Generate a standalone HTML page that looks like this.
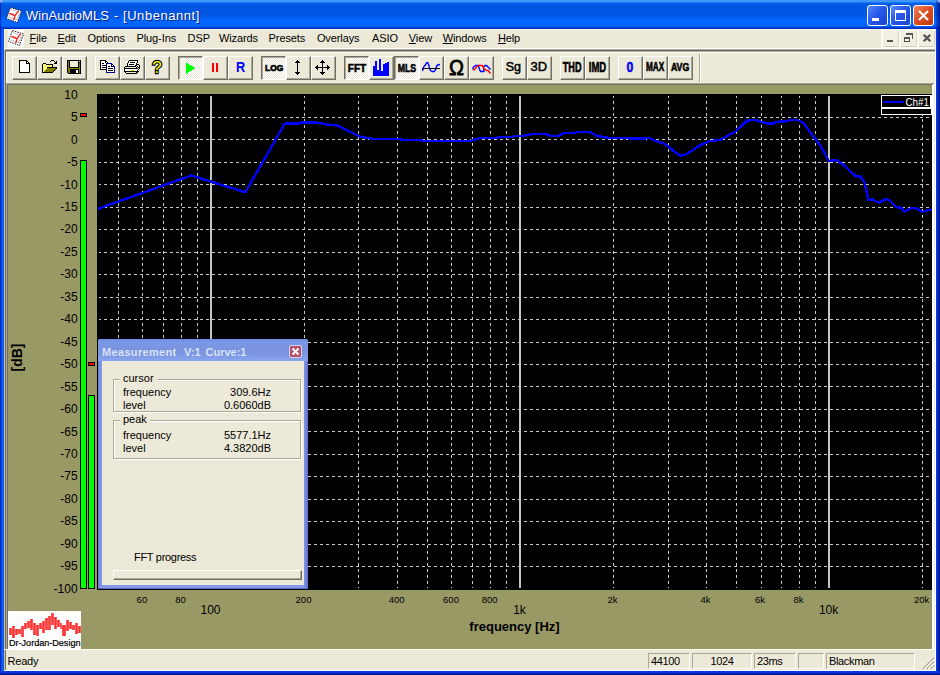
<!DOCTYPE html>
<html><head><meta charset="utf-8"><title>WinAudioMLS - [Unbenannt]</title>
<style>
html,body{margin:0;padding:0}
body{width:940px;height:675px;overflow:hidden;position:relative;background:#ece9d8;font-family:"Liberation Sans",sans-serif;font-size:11px;color:#000}
div,span{box-sizing:border-box}
.abs{position:absolute}
#title{position:absolute;left:0;top:0;width:940px;height:29px;background:linear-gradient(to bottom,#3f96fc 0,#3f96fc 1.600px,#0a6af4 2.800px,#0058e0 4.500px,#0055e0 12px,#005ae8 16px,#0066ff 20px,#0066ff 26px,#0050e0 27px,#0030c8 28px,#0030c8 29px)}
#title .cap{position:absolute;left:26px;top:8px;font-size:13px;color:#fff;white-space:pre;text-shadow:1px 1px 0 #0a1883;letter-spacing:0.05px}
.wb{position:absolute;top:5px;width:21px;height:21px;border:1px solid #fff;border-radius:3px;background:linear-gradient(135deg,#5a8af8 0,#2858ea 45%,#1a42cc 100%)}
.wb.close{background:linear-gradient(135deg,#ee8560 0,#dc4c20 50%,#c23a12 100%)}
#lb{position:absolute;left:0;top:29px;width:4px;height:646px;background:linear-gradient(to right,#0019cf 0,#0831d9 1px,#166aee 2px,#0855dd 4px)}
#rb{position:absolute;left:936px;top:29px;width:4px;height:646px;background:linear-gradient(to right,#0a3ce0 0,#0831d9 2px,#001590 3px,#001590 4px)}
#bb{position:absolute;left:0;top:671px;width:940px;height:4px;background:linear-gradient(to bottom,#0a3ce0 0,#0831d9 2px,#001590 3px,#001590 4px)}
#menu{position:absolute;left:4px;top:29px;width:932px;height:21px;background:#ece9d8;border-top:1px solid #fbf8e8}
.mi{position:absolute;top:31px;height:14px;line-height:14px;font-size:11px;white-space:nowrap;text-align:center;letter-spacing:-0.100px}
.mi u{text-decoration:underline;text-underline-offset:1px}
.mdib{position:absolute;top:31px;width:16px;height:16px;background:#f1efe2;border-right:1px solid #d8d4c2;border-bottom:1px solid #d0ccb8;border-radius:1px}
.tb{position:absolute;top:56px;width:25px;height:24px;background:#ece9d8;border-left:1px solid #fff;border-top:1px solid #fff;border-right:1px solid #716f64;border-bottom:1px solid #716f64;box-shadow:inset -1px -1px 0 #aca899}
.tb>*{position:absolute;left:-1px;top:-1px}
.tb.pressed{border-left:1px solid #716f64;border-top:1px solid #716f64;border-right:1px solid #fff;border-bottom:1px solid #fff;box-shadow:inset 1px 1px 0 #aca899;background:#f6f4ea conic-gradient(#fff 25%,#ece9d8 0 50%,#fff 0 75%,#ece9d8 0) 0 0/2px 2px}
.tb.pressed>*{left:0;top:0}
.tb .t{width:24px;text-align:center;font-weight:bold;line-height:16px;left:-1px;white-space:nowrap}
.tb.pressed .t{left:0;margin-top:1px}
.tb .heavy{-webkit-text-stroke:0.500px #000}
.tb .q{width:24px;text-align:center;font-weight:bold;font-size:17px;line-height:16px;top:3px;color:#ffff00;-webkit-text-stroke:1px #000;paint-order:stroke fill}
#client{position:absolute;left:6px;top:83px;width:928px;height:567px;background:#999966;border-left:2px solid #716f64;border-top:2px solid #716f64;border-right:2px solid #fff;border-bottom:1px solid #fff}
.sp{position:absolute;top:653px;height:16px;border-left:1px solid #aca899;border-top:1px solid #aca899;border-right:1px solid #fff;border-bottom:1px solid #fff;font-size:11px;line-height:15px;padding-left:2px;white-space:nowrap;letter-spacing:-0.350px}
#dlg{position:absolute;left:98px;top:339px;width:210px;height:250px;background:linear-gradient(to right,#6b80d8 0,#8397e6 3px,#8397e6 206px,#7185dc 208px,#5e70cc 210px);border-radius:2px 2px 0 0;box-shadow:inset 0 -1px 0 #5a6cc8}
#dlg .tt{position:absolute;left:0;top:0;width:210px;height:22px;border-radius:2px 2px 0 0;background:linear-gradient(to bottom,#6f8be4 0,#7b98e6 3px,#7a93df 10px,#7d97e2 16px,#88a4ee 21px,#88a4ee 22px)}
#dlg .cap{position:absolute;left:4px;top:7px;font-weight:bold;font-size:11px;line-height:13px;color:#d9e2f7;white-space:pre}
#dlg .body{position:absolute;left:4px;top:22px;width:202px;height:224px;background:#ece9d8}
.gb{position:absolute;border:1px solid #aca899;box-shadow:inset 1px 1px 0 #fff,1px 1px 0 #fff}
.gb .lg{position:absolute;left:6px;top:-8px;background:#ece9d8;padding:0 3px;line-height:13px}
.dl{position:absolute;line-height:13px;white-space:nowrap}
</style></head><body>
<div id="title">
<svg class="abs" style="left:6px;top:7px" width="16" height="16" viewBox="0 0 16 16"><path d="M4.500 0.500L15.500 4L11.500 15.500L0.500 11.500Z" fill="#fff" stroke="#222" stroke-width="1" stroke-dasharray="1.500 1"/><path d="M1.500 9.500L12 13M2.500 6.500L7 8M5 2.500L10.500 4.500M13.500 6L10.500 13" fill="none" stroke="#999" stroke-width="0.600"/><path d="M3.500 6.500C6 7 7.500 7.500 9 9M12.500 4C11 6 9.500 7.500 9 9C8.500 10.500 8.500 11.500 7.500 13" fill="none" stroke="#ff2020" stroke-width="1.300"/></svg>
<span class="cap">WinAudioMLS <span style="position:absolute;left:88px;top:0">-</span> <span style="position:absolute;left:97px;top:0;letter-spacing:0.55px">[Unbenannt]</span></span>
<div class="wb" style="left:867px"><div class="abs" style="left:4px;top:12px;width:7px;height:3px;background:#fff"></div></div>
<div class="wb" style="left:890px"><div class="abs" style="left:4px;top:4px;width:11px;height:11px;border:1px solid #fff;border-top:3px solid #fff"></div></div>
<div class="wb close" style="left:913px"><svg class="abs" style="left:0;top:0" width="19" height="19"><path d="M5 5L14 14M14 5L5 14" stroke="#fff" stroke-width="2.200"/></svg></div>
</div>
<div class="abs" style="left:936px;top:0;width:4px;height:29px;background:linear-gradient(to right,rgba(0,20,150,0.25),rgba(0,10,120,0.75))"></div><div class="abs" style="left:0;top:0;width:1px;height:29px;background:rgba(0,10,150,0.6)"></div><div class="abs" style="left:0;top:0;width:3px;height:3px;background:linear-gradient(135deg,#8ea6ee 0,#8ea6ee 45%,rgba(120,150,240,0) 75%)"></div><div class="abs" style="left:937px;top:0;width:3px;height:3px;background:linear-gradient(225deg,#8ea6ee 0,#8ea6ee 45%,rgba(120,150,240,0) 75%)"></div>
<div id="lb"></div><div id="rb"></div><div id="bb"></div>
<div class="abs" style="left:4px;top:29px;width:1px;height:642px;background:#c8c2a8"></div>
<div class="abs" style="left:935px;top:29px;width:1px;height:642px;background:#fff"></div>
<div id="menu"></div>
<div class="abs" style="left:8px;top:30px;width:16px;height:17px;background:#fff"></div>
<svg class="abs" style="left:8px;top:30px" width="16" height="16" viewBox="0 0 16 16"><path d="M4.500 0.500L15.500 4L11.500 15.500L0.500 11.500Z" fill="#fff" stroke="#222" stroke-width="1" stroke-dasharray="1.500 1"/><path d="M1.500 9.500L12 13M2.500 6.500L7 8M5 2.500L10.500 4.500M13.500 6L10.500 13" fill="none" stroke="#999" stroke-width="0.600"/><path d="M3.500 6.500C6 7 7.500 7.500 9 9M12.500 4C11 6 9.500 7.500 9 9C8.500 10.500 8.500 11.500 7.500 13" fill="none" stroke="#ff2020" stroke-width="1.300"/></svg>
<span class="mi" style="left:29.6px;width:15.5px"><u>F</u>ile</span>
<span class="mi" style="left:57.5px;width:17.8px"><u>E</u>dit</span>
<span class="mi" style="left:87.6px;width:36.5px">Options</span>
<span class="mi" style="left:136.5px;width:38.7px">Plug-Ins</span>
<span class="mi" style="left:187.6px;width:18.7px">DSP</span>
<span class="mi" style="left:218.9px;width:37.3px">Wizards</span>
<span class="mi" style="left:268.6px;width:35.4px">Presets</span>
<span class="mi" style="left:316.9px;width:42.2px">Overlays</span>
<span class="mi" style="left:372.0px;width:23.6px">ASIO</span>
<span class="mi" style="left:408.8px;width:21.2px"><u>V</u>iew</span>
<span class="mi" style="left:442.7px;width:42.3px"><u>W</u>indows</span>
<span class="mi" style="left:497.9px;width:20.6px"><u>H</u>elp</span>
<div class="abs" style="left:881px;top:30px;width:54px;height:18px;background:#fbfaf4"></div>
<div class="mdib" style="left:883px"><div class="abs" style="left:4px;top:9px;width:6px;height:2px;background:#555"></div></div>
<div class="mdib" style="left:901px"><svg class="abs" style="left:0;top:0" width="16" height="16" shape-rendering="crispEdges"><rect x="5" y="2" width="7" height="2" fill="#555"/><rect x="11" y="2" width="1" height="6" fill="#555"/><rect x="3" y="6" width="6" height="5" fill="#f1efe2"/><rect x="3" y="6" width="6" height="2" fill="#555"/><rect x="3" y="6" width="1" height="5" fill="#555"/><rect x="8" y="6" width="1" height="5" fill="#555"/><rect x="3" y="10" width="6" height="1" fill="#555"/></svg></div>
<div class="mdib" style="left:919px"><svg class="abs" style="left:0;top:0" width="16" height="16"><path d="M4.700 3.700L11.300 10.300M11.300 3.700L4.700 10.300" stroke="#555" stroke-width="2.300"/></svg></div>
<div class="abs" style="left:5px;top:48px;width:930px;height:1px;background:#fff"></div>
<div class="abs" style="left:5px;top:49px;width:930px;height:3px;background:linear-gradient(#aca899 0,#aca899 1px,#716f64 1px,#716f64 2px,#aca899 2px,#aca899 3px)"></div>
<div class="abs" style="left:5px;top:52px;width:930px;height:1px;background:#fff"></div>
<div class="abs" style="left:5px;top:50px;width:1px;height:620px;background:#716f64"></div>
<div class="abs" style="left:6px;top:52px;width:1px;height:31px;background:#fff"></div>
<div class="tb" style="left:12px"><svg width="24" height="23" viewBox="0 0 24 23" ><g shape-rendering="crispEdges"><path d="M7.5 4.5H14.5L17.5 7.5V16.5H7.5Z" fill="#fff" stroke="#000"/><path d="M14.5 4.5V7.5H17.5" fill="none" stroke="#000"/></g></svg></div>
<div class="tb" style="left:37px"><svg width="24" height="23" viewBox="0 0 24 23" ><g shape-rendering="crispEdges"><rect x="6" y="8" width="3" height="1" fill="#ffff70"/><rect x="6" y="9" width="9" height="2" fill="#ffff70"/><rect x="6" y="11" width="4" height="1" fill="#ffff70"/><rect x="6" y="12" width="3" height="1" fill="#ffff70"/><rect x="6" y="13" width="2" height="1" fill="#ffff70"/><rect x="6" y="14" width="1" height="1" fill="#ffff70"/><rect x="10" y="12" width="9" height="1" fill="#808000"/><rect x="9" y="13" width="9" height="1" fill="#808000"/><rect x="8" y="14" width="9" height="1" fill="#808000"/><rect x="7" y="15" width="9" height="1" fill="#808000"/><rect x="6" y="7" width="3" height="1" fill="#000"/><rect x="5" y="8" width="1" height="9" fill="#000"/><rect x="9" y="8" width="7" height="1" fill="#000"/><rect x="15" y="9" width="1" height="2" fill="#000"/><rect x="10" y="11" width="10" height="1" fill="#000"/><rect x="9" y="12" width="1" height="1" fill="#ffff70"/><rect x="8" y="13" width="1" height="1" fill="#ffff70"/><rect x="7" y="14" width="1" height="1" fill="#ffff70"/><rect x="6" y="15" width="1" height="1" fill="#ffff70"/><rect x="19" y="12" width="1" height="1" fill="#000"/><rect x="18" y="13" width="1" height="1" fill="#000"/><rect x="17" y="14" width="1" height="1" fill="#000"/><rect x="16" y="15" width="1" height="1" fill="#000"/><rect x="5" y="16" width="11" height="1" fill="#000"/><rect x="13" y="5" width="1" height="1" fill="#000"/><rect x="14" y="4" width="3" height="1" fill="#000"/><rect x="17" y="5" width="1" height="1" fill="#000"/><rect x="18" y="6" width="1" height="1" fill="#000"/><rect x="19" y="5" width="1" height="3" fill="#000"/><rect x="17" y="7" width="2" height="1" fill="#000"/></g></svg></div>
<div class="tb" style="left:62px"><svg width="24" height="23" viewBox="0 0 24 23" ><g shape-rendering="crispEdges"><rect x="5" y="4" width="14" height="14" fill="#000"/><rect x="6" y="5" width="1" height="12" fill="#808000"/><rect x="17" y="7" width="1" height="10" fill="#808000"/><rect x="7" y="12" width="10" height="1" fill="#808000"/><rect x="7" y="13" width="1" height="4" fill="#808000"/><rect x="8" y="5" width="8" height="6" fill="#ece9d8"/><rect x="14" y="14" width="2" height="3" fill="#fff"/><rect x="17" y="5" width="1" height="1" fill="#fff"/><rect x="5" y="17" width="1" height="1" fill="#ece9d8"/></g></svg></div>
<div class="tb" style="left:95px"><svg width="24" height="23" viewBox="0 0 24 23" ><g shape-rendering="crispEdges"><rect x="6" y="5" width="5" height="8" fill="#fff"/><rect x="11" y="6" width="1" height="7" fill="#fff"/><rect x="5" y="4" width="6" height="1" fill="#000"/><rect x="5" y="4" width="1" height="10" fill="#000"/><rect x="5" y="13" width="7" height="1" fill="#000"/><rect x="11" y="5" width="1" height="1" fill="#000"/><rect x="12" y="6" width="1" height="2" fill="#000"/><rect x="10" y="5" width="1" height="2" fill="#000"/><rect x="7" y="7" width="2" height="1" fill="#000"/><rect x="7" y="9" width="4" height="1" fill="#000"/><rect x="7" y="11" width="4" height="1" fill="#000"/><rect x="12" y="8" width="5" height="8" fill="#fff"/><rect x="17" y="9" width="1" height="7" fill="#fff"/><rect x="18" y="10" width="1" height="6" fill="#fff"/><rect x="11" y="7" width="6" height="1" fill="#000080"/><rect x="11" y="7" width="1" height="10" fill="#000080"/><rect x="11" y="16" width="9" height="1" fill="#000080"/><rect x="19" y="10" width="1" height="7" fill="#000080"/><rect x="17" y="8" width="1" height="1" fill="#000080"/><rect x="18" y="9" width="1" height="1" fill="#000080"/><rect x="16" y="8" width="1" height="3" fill="#000080"/><rect x="17" y="10" width="2" height="1" fill="#000080"/><rect x="13" y="10" width="2" height="1" fill="#000"/><rect x="13" y="12" width="5" height="1" fill="#000"/><rect x="13" y="14" width="5" height="1" fill="#000"/></g></svg></div>
<div class="tb" style="left:120px"><svg width="24" height="23" viewBox="0 0 24 23" ><g shape-rendering="crispEdges"><rect x="9" y="5" width="8" height="1" fill="#fff"/><rect x="8" y="6" width="9" height="1" fill="#fff"/><rect x="8" y="7" width="8" height="1" fill="#fff"/><rect x="8" y="8" width="8" height="1" fill="#fff"/><rect x="8" y="9" width="7" height="1" fill="#fff"/><rect x="9" y="4" width="9" height="1" fill="#000"/><rect x="8" y="5" width="1" height="2" fill="#000"/><rect x="7" y="7" width="1" height="3" fill="#000"/><rect x="17" y="5" width="1" height="2" fill="#000"/><rect x="16" y="7" width="1" height="2" fill="#000"/><rect x="15" y="9" width="1" height="1" fill="#000"/><rect x="10" y="6" width="5" height="1" fill="#000"/><rect x="9" y="8" width="5" height="1" fill="#000"/><rect x="5" y="10" width="3" height="1" fill="#000"/><rect x="8" y="10" width="8" height="1" fill="#000"/><rect x="4" y="11" width="1" height="5" fill="#000"/><rect x="5" y="11" width="11" height="1" fill="#ece9d8"/><rect x="4" y="12" width="13" height="1" fill="#000"/><rect x="5" y="13" width="12" height="2" fill="#fff"/><rect x="11" y="14" width="3" height="1" fill="#e8e800"/><rect x="4" y="15" width="14" height="1" fill="#000"/><rect x="5" y="16" width="1" height="1" fill="#000"/><rect x="6" y="16" width="10" height="1" fill="#ece9d8"/><rect x="16" y="16" width="1" height="1" fill="#000"/><rect x="6" y="17" width="11" height="1" fill="#000"/><rect x="16" y="9" width="1" height="1" fill="#000"/><rect x="17" y="8" width="1" height="1" fill="#000"/><rect x="18" y="8" width="1" height="1" fill="#000"/><rect x="19" y="9" width="1" height="4" fill="#000"/><rect x="18" y="13" width="1" height="1" fill="#000"/><rect x="17" y="14" width="1" height="1" fill="#000"/><rect x="18" y="15" width="1" height="1" fill="#000"/><rect x="17" y="16" width="1" height="1" fill="#000"/><rect x="17" y="10" width="1" height="1" fill="#000"/><rect x="18" y="11" width="1" height="1" fill="#000"/><rect x="17" y="12" width="1" height="1" fill="#000"/><rect x="16" y="11" width="1" height="1" fill="#000"/><rect x="18" y="9" width="1" height="1" fill="#ece9d8"/></g></svg></div>
<div class="tb" style="left:145px"></div>
<div class="tb pressed" style="left:178px"><svg width="24" height="23" viewBox="0 0 24 23" ><path d="M7 5.5V17L16.3 11.2Z" fill="#00ff00" shape-rendering="crispEdges"/></svg></div>
<div class="tb" style="left:203px"><svg width="24" height="23" viewBox="0 0 24 23" ><g fill="#ff0000" shape-rendering="crispEdges"><rect x="9" y="7" width="2" height="9"/><rect x="13" y="7" width="2" height="9"/></g></svg></div>
<div class="tb" style="left:228px"></div>
<div class="tb pressed" style="left:261px"></div>
<div class="tb" style="left:286px"><svg width="24" height="23" viewBox="0 0 24 23" ><g shape-rendering="crispEdges"><rect x="11" y="4" width="1" height="15" fill="#000"/><rect x="10" y="5" width="3" height="1" fill="#000"/><rect x="9" y="6" width="5" height="1" fill="#000"/><rect x="9" y="16" width="5" height="1" fill="#000"/><rect x="10" y="17" width="3" height="1" fill="#000"/></g></svg></div>
<div class="tb" style="left:311px"><svg width="24" height="23" viewBox="0 0 24 23" ><g shape-rendering="crispEdges"><rect x="11" y="4" width="1" height="15" fill="#000"/><rect x="10" y="5" width="3" height="1" fill="#000"/><rect x="9" y="6" width="5" height="1" fill="#000"/><rect x="9" y="16" width="5" height="1" fill="#000"/><rect x="10" y="17" width="3" height="1" fill="#000"/><rect x="4" y="11" width="15" height="1" fill="#000"/><rect x="5" y="10" width="1" height="3" fill="#000"/><rect x="6" y="9" width="1" height="5" fill="#000"/><rect x="16" y="9" width="1" height="5" fill="#000"/><rect x="17" y="10" width="1" height="3" fill="#000"/></g></svg></div>
<div class="tb pressed" style="left:344px"></div>
<div class="tb" style="left:369px"><svg width="24" height="23" viewBox="0 0 24 23" ><g shape-rendering="crispEdges" fill="#0000ff"><rect x="4" y="10" width="2" height="10"/><rect x="6" y="5" width="2" height="15"/><rect x="8" y="14" width="2" height="6"/><rect x="10" y="3" width="2" height="17"/><rect x="12" y="15" width="2" height="5"/><rect x="14" y="8" width="2" height="12"/><rect x="16" y="6.500" width="2" height="13.500"/><rect x="18" y="6" width="2" height="14"/></g></svg></div>
<div class="tb pressed" style="left:394px"></div>
<div class="tb" style="left:419px"><svg width="24" height="23" viewBox="0 0 24 23" ><path d="M3.5 15L4.5 11.5L5.5 9.5L6.5 9.3L7 7.5L8 6.5L9 7L9.8 9L10.5 12L11.5 14.5L13 15.5L15 15.5L16.5 14L17.5 10.5L18.5 9L21 8.5" fill="none" stroke="#0000ff" stroke-width="1.4" stroke-linejoin="round"/><rect x="3" y="12" width="18" height="1" fill="#000" shape-rendering="crispEdges"/></svg></div>
<div class="tb" style="left:444px"></div>
<div class="tb" style="left:469px"><svg width="24" height="23" viewBox="0 0 24 23" ><path d="M4 13.5L4 11.5L6.5 9.5L9.5 9.5L10 12L11.5 15.5L15 15.5L14.5 11L16 9.5L17.5 9.5L21.5 13.5" fill="none" stroke="#0000ff" stroke-width="1.4" stroke-linejoin="round"/><path d="M4.500 14.500L8 10.500L9.500 9.500L13.500 9.500L14.500 12L17.500 14.500L19 14.500L21.500 17.500" fill="none" stroke="#ff0000" stroke-width="1.4" stroke-linejoin="round"/></svg></div>
<div class="tb" style="left:502px"></div>
<div class="tb" style="left:527px"></div>
<div class="tb" style="left:560px"></div>
<div class="tb" style="left:585px"></div>
<div class="tb" style="left:618px"></div>
<div class="tb" style="left:643px"></div>
<div class="tb" style="left:668px"></div>
<svg width="940" height="90" viewBox="0 0 940 90" style="position:absolute;left:0;top:0;font-family:Liberation Sans,sans-serif"><text x="156.9" y="72.8" font-size="17" font-weight="normal" fill="#ffff00" stroke="#000" stroke-width="2.3" paint-order="stroke" text-anchor="middle" stroke-linejoin="miter">?</text><text x="236" y="72" font-size="14" font-weight="bold" fill="#0000ff" textLength="9.2" lengthAdjust="spacingAndGlyphs">R</text><text x="265" y="70.8" font-size="9.5" font-weight="bold" fill="#000" stroke="#000" stroke-width="0.7" textLength="18.3" lengthAdjust="spacingAndGlyphs">LOG</text><text x="347.8" y="72" font-size="11" font-weight="bold" fill="#000" stroke="#000" stroke-width="0.6" textLength="18.5" lengthAdjust="spacingAndGlyphs">FFT</text><text x="397.7" y="72.2" font-size="11" font-weight="bold" fill="#000" stroke="#000" stroke-width="0.6" textLength="18.3" lengthAdjust="spacingAndGlyphs">MLS</text><text x="449" y="74.7" font-size="22" font-weight="normal" fill="#000" stroke="#000" stroke-width="0.8" textLength="15.0" lengthAdjust="spacingAndGlyphs">Ω</text><text x="505.7" y="71.3" font-size="12.5" font-weight="normal" fill="#000" stroke="#000" stroke-width="0.5" textLength="15.3" lengthAdjust="spacingAndGlyphs">Sg</text><text x="530.6" y="71.3" font-size="12.5" font-weight="normal" fill="#000" stroke="#000" stroke-width="0.5" textLength="16.6" lengthAdjust="spacingAndGlyphs">3D</text><text x="562.8" y="72" font-size="14" font-weight="bold" fill="#000" stroke="#000" stroke-width="0.6" textLength="18.7" lengthAdjust="spacingAndGlyphs">THD</text><text x="588.8" y="72" font-size="14" font-weight="bold" fill="#000" stroke="#000" stroke-width="0.6" textLength="17.4" lengthAdjust="spacingAndGlyphs">IMD</text><text x="626.6" y="72" font-size="14" font-weight="bold" fill="#0000ff" stroke="#0000ff" stroke-width="0.5" textLength="6.8" lengthAdjust="spacingAndGlyphs">0</text><text x="646" y="70.7" font-size="12" font-weight="bold" fill="#000" stroke="#000" stroke-width="0.6" textLength="18.3" lengthAdjust="spacingAndGlyphs">MAX</text><text x="670.9" y="70.7" font-size="11" font-weight="bold" fill="#000" stroke="#000" stroke-width="0.6" textLength="18.3" lengthAdjust="spacingAndGlyphs">AVG</text></svg>
<div class="abs" style="left:699px;top:54px;width:1px;height:28px;background:#aca899"></div>
<div class="abs" style="left:700px;top:54px;width:1px;height:28px;background:#fff"></div>
<div id="client"></div>
<div class="abs" style="left:6px;top:83px;width:1px;height:566px;background:#aca899"></div>
<div class="abs" style="left:6px;top:83px;width:926px;height:1px;background:#aca899"></div>
<svg class="plot" width="940" height="675" viewBox="0 0 940 675" style="position:absolute;left:0;top:0">
<rect x="97" y="94" width="835" height="496" fill="#000" shape-rendering="crispEdges"/>
<g stroke="#c8c8c8" stroke-width="1" stroke-dasharray="3 3" stroke-dashoffset="1" shape-rendering="crispEdges" fill="none">
<path d="M99 117.5H931"/>
<path d="M99 139.5H931"/>
<path d="M99 162.5H931"/>
<path d="M99 184.5H931"/>
<path d="M99 207.5H931"/>
<path d="M99 229.5H931"/>
<path d="M99 252.5H931"/>
<path d="M99 274.5H931"/>
<path d="M99 297.5H931"/>
<path d="M99 319.5H931"/>
<path d="M99 342.5H931"/>
<path d="M99 364.5H931"/>
<path d="M99 386.5H931"/>
<path d="M99 409.5H931"/>
<path d="M99 431.5H931"/>
<path d="M99 454.5H931"/>
<path d="M99 476.5H931"/>
<path d="M99 499.5H931"/>
<path d="M99 521.5H931"/>
<path d="M99 544.5H931"/>
<path d="M99 566.5H931"/>
<path d="M118.5 96V588"/>
<path d="M142.5 96V588"/>
<path d="M163.5 96V588"/>
<path d="M181.5 96V588"/>
<path d="M197.5 96V588"/>
<path d="M304.5 96V588"/>
<path d="M358.5 96V588"/>
<path d="M397.5 96V588"/>
<path d="M427.5 96V588"/>
<path d="M451.5 96V588"/>
<path d="M472.5 96V588"/>
<path d="M490.5 96V588"/>
<path d="M506.5 96V588"/>
<path d="M613.5 96V588"/>
<path d="M668.5 96V588"/>
<path d="M706.5 96V588"/>
<path d="M736.5 96V588"/>
<path d="M761.5 96V588"/>
<path d="M781.5 96V588"/>
<path d="M799.5 96V588"/>
<path d="M815.5 96V588"/>
<path d="M922.5 96V588"/>
</g>
<g fill="#c4c4c4" shape-rendering="crispEdges">
<rect x="210" y="96" width="2" height="492"/>
<rect x="519" y="96" width="2" height="492"/>
<rect x="828" y="96" width="2" height="492"/>
</g>
<polyline points="98.0,208.8 191.2,175.5 245.4,192.2 284.7,123.7 299.4,123.5 300.6,122.7 315.4,122.4 319.8,123.0 326.7,124.5 337.7,125.6 359.0,136.4 372.1,138.8 399.0,138.8 401.5,139.8 420.6,140.1 423.0,140.8 470.4,140.8 479.3,138.3 496.0,138.0 499.8,137.0 512.8,136.8 515.0,135.7 524.0,135.7 532.0,134.0 544.7,134.0 551.0,135.7 558.7,135.7 563.8,133.2 575.3,133.0 576.6,132.2 590.6,132.2 597.0,136.0 608.5,137.8 627.6,138.3 645.5,138.3 649.3,137.8 653.2,140.0 659.0,142.0 663.4,143.5 668.0,146.0 673.0,150.5 677.5,154.0 681.0,155.5 685.0,154.8 689.0,152.5 693.0,150.0 697.0,147.0 702.0,144.5 709.0,141.2 720.6,139.7 729.8,134.5 734.5,132.5 747.2,120.5 754.9,120.0 767.7,123.6 772.8,123.6 776.6,121.8 784.2,121.5 791.9,120.0 798.3,120.3 803.4,123.0 814.9,138.4 820.0,144.8 828.9,160.9 836.6,160.1 843.0,164.4 855.7,176.2 860.8,176.7 864.7,183.0 868.5,200.2 872.3,199.2 878.7,202.7 886.4,198.9 890.2,201.0 896.6,207.3 901.7,207.8 904.2,211.7 911.9,207.8 917.0,208.6 922.1,211.9 931.5,209.4" fill="none" stroke="#0000ff" stroke-width="2.4" stroke-linejoin="round" shape-rendering="crispEdges"/>
<g shape-rendering="crispEdges"><rect x="881" y="95" width="51" height="20" fill="#fff"/><rect x="882" y="96" width="48" height="11" fill="#000"/><rect x="882" y="109" width="49" height="5" fill="#000"/><rect x="883" y="101" width="21" height="2" fill="#0000ff"/></g>
<text x="905.5" y="105.6" font-family="Liberation Sans, sans-serif" font-size="11" fill="#fff" textLength="23.5" lengthAdjust="spacingAndGlyphs">Ch#1</text>
<g shape-rendering="crispEdges"><rect x="80.5" y="160.5" width="6" height="428" fill="#00ff00" stroke="#000"/><rect x="88.5" y="395.5" width="6" height="193" fill="#00ff00" stroke="#000"/><rect x="80.5" y="113.5" width="6" height="3" fill="#ff0000" stroke="#000"/><rect x="88.5" y="362.5" width="6" height="3" fill="#ff0000" stroke="#000"/></g>
<g font-family="Liberation Sans, sans-serif" font-size="12" fill="#000" text-anchor="end">
<text x="77.6" y="98.8">10</text>
<text x="77.6" y="121.2">5</text>
<text x="77.6" y="143.6">0</text>
<text x="77.6" y="166.1">-5</text>
<text x="77.6" y="188.5">-10</text>
<text x="77.6" y="211.0">-15</text>
<text x="77.6" y="233.4">-20</text>
<text x="77.6" y="255.9">-25</text>
<text x="77.6" y="278.3">-30</text>
<text x="77.6" y="300.8">-35</text>
<text x="77.6" y="323.2">-40</text>
<text x="77.6" y="345.7">-45</text>
<text x="77.6" y="368.1">-50</text>
<text x="77.6" y="390.6">-55</text>
<text x="77.6" y="413.1">-60</text>
<text x="77.6" y="435.5">-65</text>
<text x="77.6" y="457.9">-70</text>
<text x="77.6" y="480.4">-75</text>
<text x="77.6" y="502.8">-80</text>
<text x="77.6" y="525.3">-85</text>
<text x="77.6" y="547.8">-90</text>
<text x="77.6" y="570.2">-95</text>
<text x="77.6" y="592.6">-100</text>
</g>
<g font-family="Liberation Sans, sans-serif" font-size="9.5" fill="#000" text-anchor="middle">
<text x="141.9" y="603">60</text>
<text x="180.5" y="603">80</text>
<text x="303.5" y="603">200</text>
<text x="396.6" y="603">400</text>
<text x="451.0" y="603">600</text>
<text x="489.6" y="603">800</text>
<text x="612.6" y="603">2k</text>
<text x="705.6" y="603">4k</text>
<text x="760.0" y="603">6k</text>
<text x="798.6" y="603">8k</text>
<text x="921.6" y="603">20k</text>
</g>
<g font-family="Liberation Sans, sans-serif" font-size="12" fill="#000" text-anchor="middle">
<text x="210.5" y="614">100</text>
<text x="519.5" y="614">1k</text>
<text x="828.6" y="614">10k</text>
</g>
<text x="514.5" y="630.5" font-family="Liberation Sans, sans-serif" font-size="13" font-weight="bold" fill="#000" text-anchor="middle">frequency [Hz]</text>
<text transform="translate(22,357.5) rotate(-90)" font-family="Liberation Sans, sans-serif" font-size="14" font-weight="bold" fill="#000" text-anchor="middle">[dB]</text>
<rect x="8" y="611" width="73" height="38" fill="#fff" shape-rendering="crispEdges"/>
<g fill="#ff3333">
<rect x="9.2" y="628" width="2.6" height="7"/>
<rect x="12.2" y="626" width="2.6" height="12"/>
<rect x="15.2" y="629" width="2.6" height="6"/>
<rect x="18.2" y="629" width="2.6" height="5"/>
<rect x="21.2" y="626" width="2.6" height="11"/>
<rect x="24.2" y="623" width="2.6" height="6"/>
<rect x="27.2" y="621" width="2.6" height="7"/>
<rect x="30.2" y="619" width="2.6" height="11"/>
<rect x="33.2" y="623" width="2.6" height="12"/>
<rect x="36.2" y="625" width="2.6" height="11"/>
<rect x="39.2" y="623" width="2.6" height="6"/>
<rect x="42.2" y="621" width="2.6" height="12"/>
<rect x="45.2" y="618" width="2.6" height="12"/>
<rect x="48.2" y="616" width="2.6" height="14"/>
<rect x="51.2" y="613" width="2.6" height="12"/>
<rect x="54.2" y="617" width="2.6" height="12"/>
<rect x="57.2" y="620" width="2.6" height="7"/>
<rect x="60.2" y="623" width="1.6" height="6"/>
<rect x="62.2" y="625" width="3.6" height="11"/>
<rect x="66.2" y="620" width="2.6" height="11"/>
<rect x="69.2" y="622" width="2.6" height="7"/>
<rect x="72.2" y="625" width="2.6" height="5"/>
<rect x="75.2" y="623" width="2.6" height="11"/>
<rect x="78.2" y="626" width="2.6" height="7"/>
</g>
<text x="9" y="646" font-family="Liberation Sans, sans-serif" font-size="9" fill="#000" stroke="#000" stroke-width="0.2" textLength="71.5" lengthAdjust="spacingAndGlyphs">Dr-Jordan-Design</text>
</svg>
<div id="dlg"><div class="tt"></div><span class="cap"><span style="letter-spacing:0.33px">Measurement</span> <span style="position:absolute;left:82px;top:0">V:1</span> <span style="position:absolute;left:103.5px;top:0">Curve:1</span></span>
<div class="abs" style="left:191px;top:6px;width:13px;height:13px;border:1px solid #d8d0e8;border-radius:2px;background:#b3536f"><svg class="abs" style="left:0;top:0" width="11" height="11"><path d="M2.500 2.500L8.500 8.500M8.500 2.500L2.500 8.500" stroke="#fff" stroke-width="1.800"/></svg></div>
<div class="body">
<div class="gb" style="left:11px;top:18px;width:188px;height:33px"><span class="lg">cursor</span></div>
<span class="dl" style="left:21px;top:25px">frequency</span><span class="dl" style="right:33px;top:25px">309.6Hz</span>
<span class="dl" style="left:21px;top:38px">level</span><span class="dl" style="right:33px;top:38px">0.6060dB</span>
<div class="gb" style="left:11px;top:59px;width:188px;height:39px"><span class="lg">peak</span></div>
<span class="dl" style="left:21px;top:68px">frequency</span><span class="dl" style="right:33px;top:68px">5577.1Hz</span>
<span class="dl" style="left:21px;top:81px">level</span><span class="dl" style="right:33px;top:81px">4.3820dB</span>
<span class="dl" style="left:32px;top:190px;letter-spacing:-0.3px">FFT progress</span>
<div class="abs" style="left:11px;top:209px;width:189px;height:10px;border-left:1px solid #fff;border-top:1px solid #fff;border-right:1px solid #716f64;border-bottom:1px solid #716f64;box-shadow:inset -1px -1px 0 #aca899"></div>
</div></div>
<div class="abs" style="left:4px;top:649px;width:932px;height:1px;background:#fff"></div>
<div class="abs" style="left:4px;top:670px;width:932px;height:1px;background:#fff"></div>
<span class="abs" style="left:7.500px;top:655px;font-size:11px;line-height:13px;letter-spacing:-0.200px">Ready</span>
<div class="sp" style="left:648px;width:42px">44100</div>
<div class="sp" style="left:692px;width:60px;text-align:center;padding-left:0">1024</div>
<div class="sp" style="left:754px;width:42px">23ms</div>
<div class="sp" style="left:798px;width:26px"></div>
<div class="sp" style="left:826px;width:89px">Blackman</div>
<svg class="abs" style="left:921px;top:656px" width="14" height="14"><path d="M13 2L2 13M13 6L6 13M13 10L10 13" stroke="#aca899" stroke-width="1.500"/><path d="M13 3L3 13M13 7L7 13M13 11L11 13" stroke="#fff" stroke-width="1"/></svg>
</body></html>
